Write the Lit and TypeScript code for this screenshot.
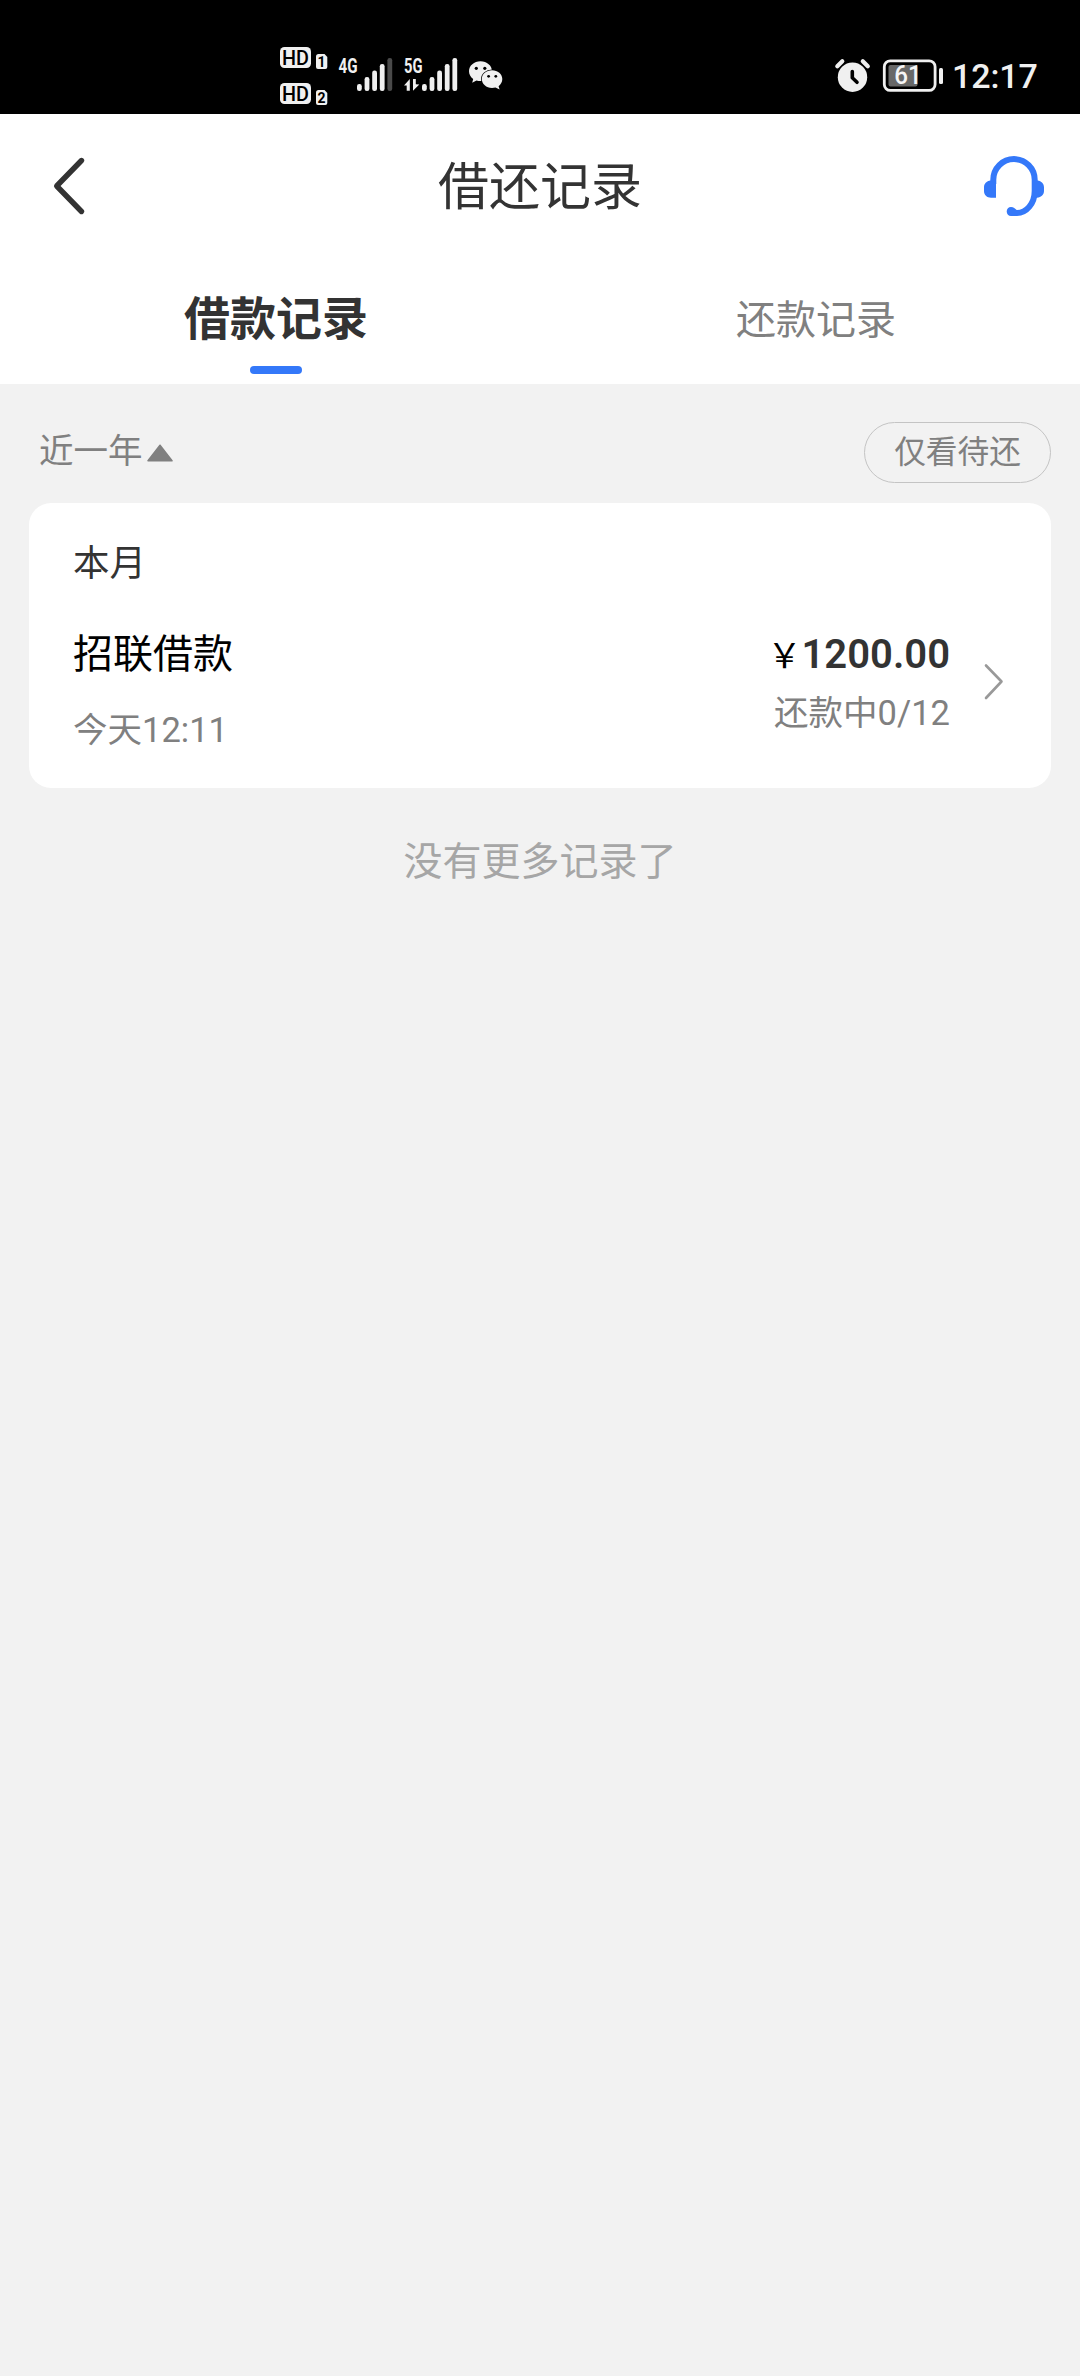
import { LitElement, html, css, svg } from "lit";
import { customElement, property, state } from "lit/decorators.js";
import { classMap } from "lit/directives/class-map.js";

interface LoanRecord {
  name: string;
  time: string;
  amount: string;
  status: string;
}

const FONT = css`Roboto, "Noto Sans CJK SC", sans-serif`;

@customElement("status-bar")
class StatusBar extends LitElement {
  static styles = css`
    :host {
      display: flex;
      height: 114px;
      padding: 36px 0 0 270px;
      box-sizing: border-box;
      background: #000;
      justify-content: space-between;
    }
    svg {
      display: block;
      font-family: Roboto, sans-serif;
    }
    .system {
      display: flex;
    }
    .clock {
      width: 133px;
      box-sizing: border-box;
      padding-left: 5px;
      color: #f0f0f0;
      font: 500 34px/80px Roboto, sans-serif;
      letter-spacing: -0.1px;
    }
  `;

  private sim(y: number, n: string) {
    return svg`
      <rect x="10" y=${y} width="31" height="21" rx="4.5" fill="#f0f0f0"/>
      <text x="12" y=${y + 17.7} font-size="20" font-weight="500" fill="#000" textLength="27" lengthAdjust="spacingAndGlyphs">HD</text>
      <path d=${`M48.5 ${y + 7}H54.5L57.3 ${y + 10}V${y + 20}Q57.3 ${y + 22} 55.3 ${y + 22}H48Q46 ${y + 22} 46 ${y + 20}V${y + 9.5}Q46 ${y + 7} 48.5 ${y + 7}Z`} fill="#f0f0f0"/>
      <text x="51.4" y=${y + 20} font-size="14" font-weight="700" text-anchor="middle" fill="#000">${n}</text>`;
  }

  private bars(x: number, lit: number) {
    return [48, 41, 34.5, 28, 22].map(
      (y, i) => svg`<rect x=${x + i * 7.6} y=${y} width="4.8" height=${55 - y} rx="2.2" fill=${i < lit ? "#f0f0f0" : "#4a4a4a"}/>`
    );
  }

  render() {
    return html`
      <svg width="250" height="78" viewBox="0 0 250 78">
        ${this.sim(11, "1")} ${this.sim(47, "2")}
        <text x="68.5" y="37" font-size="20" font-weight="700" fill="#f0f0f0" textLength="19" lengthAdjust="spacingAndGlyphs">4G</text>
        ${this.bars(87, 4)}
        <text x="134" y="37" font-size="20" font-weight="700" fill="#f0f0f0" textLength="18.5" lengthAdjust="spacingAndGlyphs">5G</text>
        <path d="M134 49.5L139.8 43V54.7H136.7V49.5ZM143 43H145.8V48.2L149.3 48.6L143 54.7Z" fill="#f0f0f0"/>
        ${this.bars(152, 5)}
        <path d="M210.5 25.2c-6.4 0-11.5 4.4-11.5 10 0 3.2 1.6 5.8 4.2 7.7l-1 3.8 4.3-2.2c1.3.4 2.6.6 4 .6 6.4 0 11.5-4.3 11.5-9.9s-5.1-10-11.500-10Z" fill="#f0f0f0"/>
        <path d="M222 34.3c-5.700 0-10.200 3.900-10.200 8.800s4.500 8.900 10.200 8.900c1.200 0 2.400-.2 3.500-.5l4.100 2.100-1-3.300c2.200-1.700 3.700-4.200 3.700-7.200 0-4.900-4.600-8.800-10.300-8.800Z" fill="#f0f0f0" stroke="#000" stroke-width="1.5" paint-order="stroke"/>
        <g fill="#000">
          <circle cx="206.3" cy="32.3" r="1.6"/><circle cx="214.8" cy="32.3" r="1.6"/>
          <circle cx="218.6" cy="40.3" r="1.4"/><circle cx="225.8" cy="40.3" r="1.4"/>
        </g>
      </svg>
      <div class="system">
        <svg width="127" height="78" viewBox="0 0 127 78">
          <circle cx="32.5" cy="41.2" r="14.7" fill="#f0f0f0"/>
          <path d="M17.3 30.3L22.3 25.3M47.8 30.3L42.8 25.3" stroke="#f0f0f0" stroke-width="4.2" stroke-linecap="round"/>
          <path d="M32.3 35.5V41.8L37 46.3" fill="none" stroke="#000" stroke-width="3.6" stroke-linecap="round" stroke-linejoin="round"/>
          <rect x="64.3" y="24.8" width="50.8" height="29.6" rx="6" fill="none" stroke="#f0f0f0" stroke-width="2.8"/>
          <rect x="68.5" y="29" width="29" height="21.4" rx="2" fill="#686868"/>
          <rect x="119" y="32" width="4" height="16" rx="1.5" fill="#f0f0f0"/>
          <text x="74.3" y="48" font-size="25" font-weight="500" fill="#f5f5f5" textLength="27.500" lengthAdjust="spacingAndGlyphs">61</text>
        </svg>
        <div class="clock">12:17</div>
      </div>
    `;
  }
}

@customElement("page-header")
class PageHeader extends LitElement {
  static styles = css`
    :host {
      display: grid;
      grid-template-columns: 120px 1fr 120px;
      align-items: center;
      height: 144px;
      background: #fff;
      font-family: ${FONT};
    }
    .title {
      padding-top: 4px;
      text-align: center;
      font-size: 51px;
      line-height: 72px;
      color: #333;
    }
    .back {
      display: block;
      margin-left: 48px;
    }
    .service {
      display: block;
      margin-left: 20px;
    }
  `;

  render() {
    return html`
      <svg class="back" width="42" height="64" viewBox="0 0 42 64">
        <path d="M33.5 6.5L8.7 32L33.5 57.5" fill="none" stroke="#333" stroke-width="5.4" stroke-linecap="round" stroke-linejoin="round"/>
      </svg>
      <div class="title">借还记录</div>
      <svg class="service" width="68" height="64" viewBox="0 0 68 64">
        <path d="M13.3 30V25.8A20.7 20.7 0 0 1 54.700 25.800V37C54.700 50 46 59 37 59H31" fill="none" stroke="#3478f9" stroke-width="6"/>
        <path d="M12 26H16V43.7H11C7 43.7 4 41 4 37V33.500C4 29.500 6.500 27 10.500 26.500ZM52 26H56L57.500 26.500C61.500 27 64 29.500 64 33.500V37C64 40.500 61.500 43.200 57 43.700H52Z" fill="#3478f9"/>
        <path d="M31 53C33.800 53 34.800 54.500 37 56.200V62H31C28.500 62 26.700 60 26.700 57.500S28.500 53 31 53Z" fill="#3478f9"/>
      </svg>
    `;
  }
}

@customElement("record-tabs")
class RecordTabs extends LitElement {
  static styles = css`
    :host {
      display: grid;
      grid-template-columns: 1fr 1fr;
      height: 126px;
      background: #fff;
      font-family: ${FONT};
    }
    .tab {
      display: flex;
      flex-direction: column;
      align-items: center;
      padding: 26px 0 0 12px;
      color: #808080;
      font-size: 40px;
      line-height: 74px;
    }
    .tab.active {
      color: #333;
      font-size: 46px;
      font-weight: 700;
      line-height: 70px;
    }
    .tab.active::after {
      content: "";
      width: 52px;
      height: 8px;
      margin-top: 12px;
      border-radius: 4px;
      background: #3478f9;
    }
  `;

  @state() private active = 0;

  render() {
    return html`${["借款记录", "还款记录"].map(
      (label, i) => html`<div class=${classMap({ tab: true, active: i === this.active })} @click=${() => (this.active = i)}>${label}</div>`
    )}`;
  }
}

@customElement("loan-item")
class LoanItem extends LitElement {
  static styles = css`
    :host {
      display: grid;
      grid-template-columns: 1fr auto 29px;
      column-gap: 28px;
      align-items: start;
      font-family: ${FONT};
    }
    .name {
      padding-top: 1px;
      font-size: 40px;
      line-height: 56px;
      color: #000;
    }
    .time {
      margin-top: 22px;
      font-size: 34.5px;
      line-height: 50px;
      color: #808080;
    }
    .side {
      text-align: right;
    }
    .amount {
      font-size: 40px;
      font-weight: 600;
      line-height: 58px;
      color: #333;
    }
    .yen {
      font-size: 34px;
      font-weight: 400;
      color: #000;
      font-family: "Noto Sans CJK SC", sans-serif;
      line-height: 1;
    }
    .status {
      margin-top: 4px;
      font-size: 34.5px;
      line-height: 50px;
      color: #808080;
    }
    .arrow {
      display: block;
      margin: 36px 0 0 2px;
    }
  `;

  @property({ attribute: false }) record!: LoanRecord;

  render() {
    const r = this.record;
    return html`
      <div>
        <div class="name">${r.name}</div>
        <div class="time">${r.time}</div>
      </div>
      <div class="side">
        <div class="amount"><span class="yen">￥</span>${r.amount}</div>
        <div class="status">${r.status}</div>
      </div>
      <svg class="arrow" width="26" height="40" viewBox="0 0 26 40">
        <path d="M6 3.5L21.5 19.5L6 36" fill="none" stroke="#999" stroke-width="2.6" stroke-linecap="round" stroke-linejoin="round"/>
      </svg>
    `;
  }
}

@customElement("app-root")
class AppRoot extends LitElement {
  static styles = css`
    :host {
      display: block;
      min-height: 2376px;
      background: #f2f2f2;
      font-family: ${FONT};
    }
    .filters {
      display: flex;
      align-items: center;
      justify-content: space-between;
      padding: 38px 29px 20px 39px;
      color: #808080;
    }
    .range {
      display: flex;
      align-items: center;
      gap: 4px;
      padding-bottom: 3px;
      font-size: 34.5px;
      line-height: 50px;
    }
    .range svg {
      display: block;
      margin-top: 4px;
    }
    .pending {
      box-sizing: border-box;
      width: 187px;
      height: 61px;
      border: 1px solid #c4c4c4;
      border-radius: 31px;
      text-align: center;
      font-size: 31.7px;
      line-height: 60px;
    }
    .card {
      margin: 0 29px;
      padding: 35px 44px 33px;
      border-radius: 22px;
      background: #fff;
    }
    .month {
      margin-bottom: 36px;
      font-size: 36.5px;
      line-height: 52px;
      color: #333;
    }
    .end {
      margin-top: 46px;
      text-align: center;
      font-size: 39px;
      line-height: 56px;
      color: #a6a6a6;
    }
  `;

  private records: LoanRecord[] = [
    { name: "招联借款", time: "今天12:11", amount: "1200.00", status: "还款中0/12" },
  ];

  render() {
    return html`
      <status-bar></status-bar>
      <page-header></page-header>
      <record-tabs></record-tabs>
      <div class="filters">
        <div class="range">
          <span>近一年</span>
          <svg width="26" height="18" viewBox="0 0 26 18">
            <path d="M13 1.2L25 16.8H1Z" fill="#808080" stroke="#808080" stroke-width="1.5" stroke-linejoin="round"/>
          </svg>
        </div>
        <div class="pending">仅看待还</div>
      </div>
      <div class="card">
        <div class="month">本月</div>
        ${this.records.map((r) => html`<loan-item .record=${r}></loan-item>`)}
      </div>
      <div class="end">没有更多记录了</div>
    `;
  }
}
